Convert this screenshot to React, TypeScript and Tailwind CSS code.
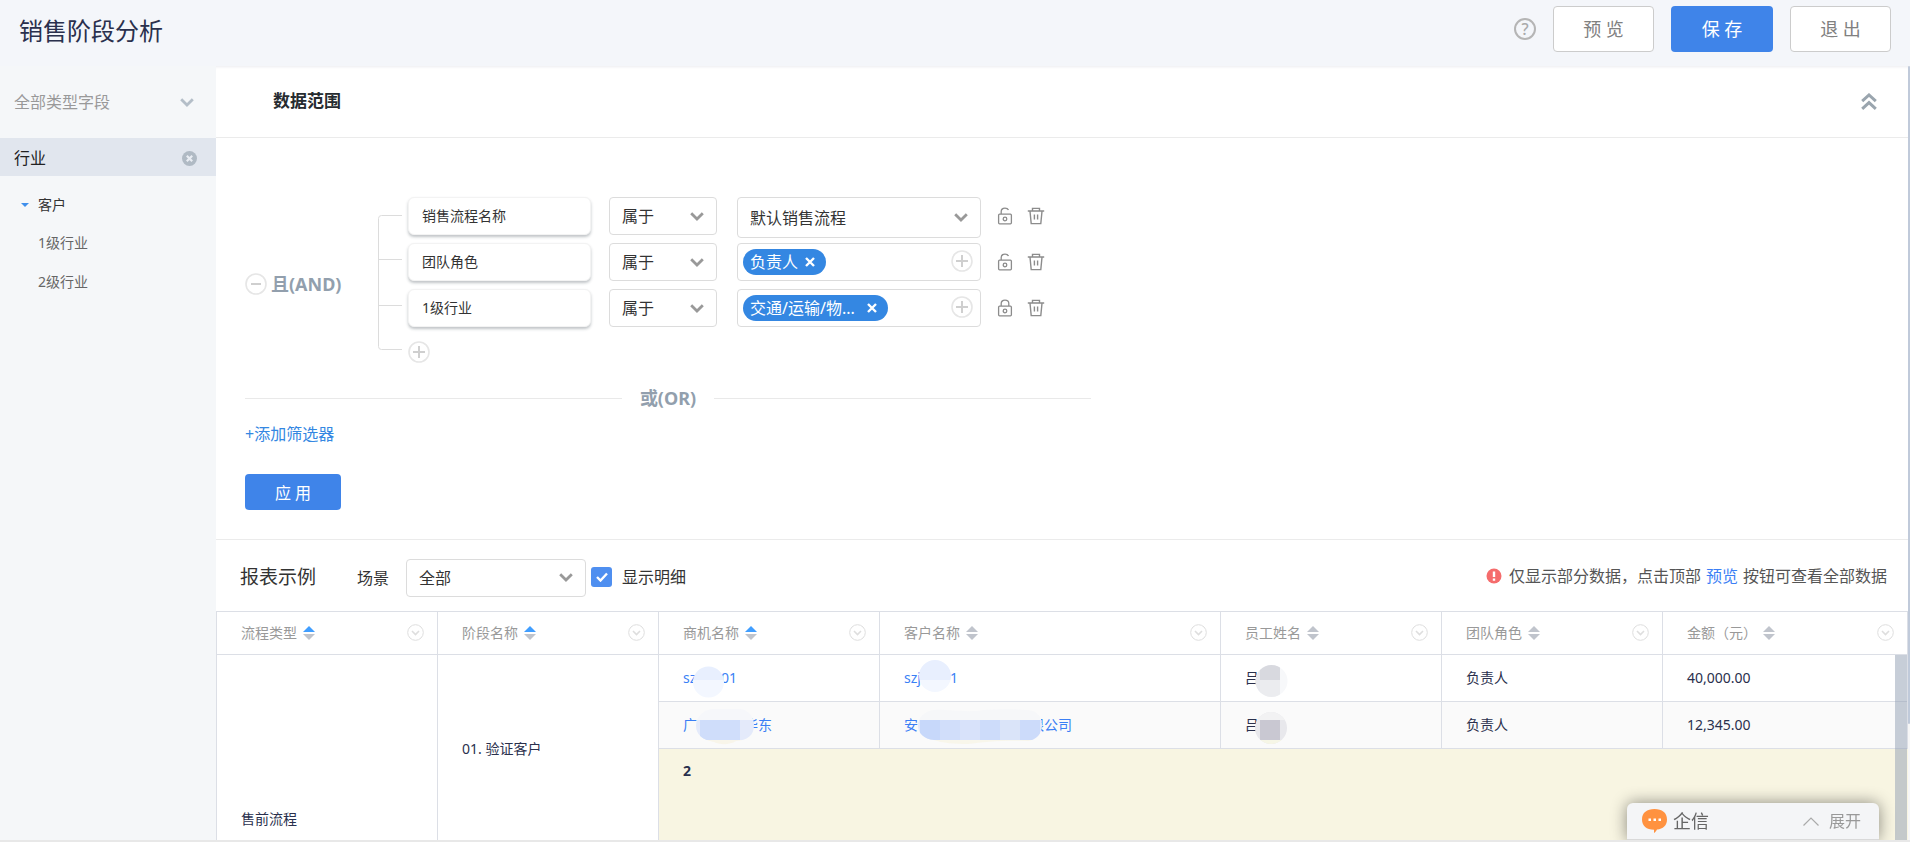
import { clsx } from 'clsx';
import type { ReactNode } from 'react';

type SelectProps = { name: string; label: string; className: string; chevronClass?: string };

const COLUMNS = [
  { title: '流程类型', width: 'w-[221px]', sorted: true },
  { title: '阶段名称', width: 'w-[221px]', sorted: true },
  { title: '商机名称', width: 'w-[221px]', sorted: true },
  { title: '客户名称', width: 'w-[341px]', sorted: false },
  { title: '员工姓名', width: 'w-[221px]', sorted: false },
  { title: '团队角色', width: 'w-[221px]', sorted: false },
  { title: '金额（元）', width: '', sorted: false },
];

const FILTERS = [
  { field: '销售流程名称', select: '默认销售流程', locked: false },
  { field: '团队角色', tag: '负责人', tagWidth: 'w-12', locked: false },
  { field: '1级行业', tag: '交通/运输/物...', tagWidth: 'w-[110px]', locked: true },
];

function Chevron({ className }: { className?: string }) {
  return (
    <svg viewBox="0 0 14 9" className={clsx('h-[9px] w-3.5 fill-none', className)} aria-hidden="true">
      <path d="M1.2 1.200 7 7l5.800-5.800" stroke="currentColor" strokeWidth="2.800" />
    </svg>
  );
}

function Select({ label, name, className, chevronClass = 'text-[#999]' }: SelectProps) {
  return (
    <div className={clsx('relative flex items-center', className)}>
      <select aria-label={name} className="h-full w-full appearance-none bg-transparent pr-8 pl-3 text-base outline-none">
        <option>{label}</option>
      </select>
      <Chevron className={clsx('pointer-events-none absolute right-3', chevronClass)} />
    </div>
  );
}

function CircleIcon({ plus = false }: { plus?: boolean }) {
  return (
    <svg viewBox="0 0 22 22" className="size-[22px] fill-none" aria-hidden="true">
      <circle cx="11" cy="11" r="10" stroke="#e6e6e6" strokeWidth="1.600" />
      <path d={plus ? 'M5 11h12M11 5v12' : 'M6 11h10'} stroke="#cfcfcf" strokeWidth="2" />
    </svg>
  );
}

function LockIcon({ locked }: { locked: boolean }) {
  return (
    <svg viewBox="0 0 16 18" className="h-[18px] w-4 fill-none" stroke="#8c8c8c" strokeWidth="1.3" aria-hidden="true">
      <rect x="1.6" y="7.2" width="12.8" height="9.6" rx="1" />
      <path d={locked ? 'M4.2 7V4.6C4.2 2.6 5.6 1.2 8 1.2s3.8 1.4 3.8 3.4V7' : 'M4.2 7V4.6C4.2 2.6 5.6 1.2 8 1.2c1.8 0 3 .8 3.5 1.9'} />
      <circle cx="8" cy="12" r="1.8" />
    </svg>
  );
}

function TrashIcon() {
  return (
    <svg viewBox="0 0 18 18" className="size-[18px] fill-none" stroke="#8c8c8c" strokeWidth="1.4" aria-hidden="true">
      <path d="M.8 4h16.4M5.500 3.800V1.400h7v2.400M3 4.200l1.200 12.400h9.600L15 4.200M7.400 7.400v5M10.600 7.400v5" />
    </svg>
  );
}

function SortIcon({ active }: { active: boolean }) {
  return (
    <svg viewBox="0 0 12 14" className="h-3.5 w-3" aria-hidden="true">
      <path d="M6 0l6 6H0z" fill={active ? '#409eff' : '#c0c4cc'} />
      <path d="M0 8h12l-6 6z" fill="#c0c4cc" />
    </svg>
  );
}

function Blob({ id, className, width, height, shape, children }: { id: string; className: string; width: number; height: number; shape: ReactNode; children: ReactNode }) {
  return (
    <svg viewBox={`0 0 ${width} ${height}`} width={width} height={height} className={clsx('absolute', className)} aria-hidden="true">
      <clipPath id={id}>{shape}</clipPath>
      <g clipPath={`url(#${id})`}>{children}</g>
    </svg>
  );
}

function Header() {
  return (
    <header className="flex h-[66px] shrink-0 items-center justify-between bg-[#f4f6fa] pr-[19px] pb-2 pl-[19px]">
      <h1 className="pt-1 text-2xl text-[#2a304d]">销售阶段分析</h1>
      <div className="flex items-center gap-[17px] text-lg text-[#808080]">
        <button aria-label="帮助" className="flex size-[22px] items-center justify-center rounded-full border-2 border-[#b5b5b5] text-base leading-none font-medium text-[#aaa]">
          ?
        </button>
        <button className="h-[46px] w-[101px] rounded border border-[#ccc] bg-white">预 览</button>
        <button className="h-[46px] w-[102px] rounded bg-[#3f84e9] text-white">保 存</button>
        <button className="h-[46px] w-[101px] rounded border border-[#ccc] bg-white">退 出</button>
      </div>
    </header>
  );
}

function Sidebar() {
  return (
    <aside className="w-[216px] shrink-0 bg-[#f5f7f9]">
      <Select name="字段类型" label="全部类型字段" className="h-[72px] pr-2 pl-0.5 text-[#999]" chevronClass="right-[22px] text-[#b4bec8]" />
      <div className="flex h-[38px] items-center justify-between bg-[#e1e6ee] pt-0.5 pr-[19px] pl-3.5 text-base text-[#222]">
        行业
        <button aria-label="清除">
          <svg viewBox="0 0 15 15" className="size-[15px]" aria-hidden="true">
            <circle cx="7.5" cy="7.5" r="7.5" fill="#b0bac4" />
            <path d="M4.8 4.8l5.4 5.4M10.2 4.8l-5.4 5.4" stroke="#e9edf3" strokeWidth="2.2" />
          </svg>
        </button>
      </div>
      <ul className="pt-2.5 pl-[38px] text-sm text-[#666]">
        <li className="relative flex h-[38px] items-center text-[#333]">
          <span className="absolute -left-[17px] border-x-4 border-t-4 border-x-transparent border-t-[#3f8fec]" />
          客户
        </li>
        <li className="flex h-[38px] items-center">1级行业</li>
        <li className="flex h-10 items-center">2级行业</li>
      </ul>
    </aside>
  );
}

function FilterRow({ filter }: { filter: (typeof FILTERS)[number] }) {
  return (
    <li className="flex h-[38px] items-start">
      <div className="mr-[18px] flex h-[38px] w-[183px] items-center rounded-md border border-[#f3f3f3] bg-white pl-[13px] text-sm shadow-[0_2px_3px_rgba(60,70,80,0.32)]">
        {filter.field}
      </div>
      <Select name={`${filter.field}条件`} label="属于" className="mr-5 h-[38px] w-[108px] rounded border border-[#dcdcdc]" />
      {filter.select ? (
        <Select name={filter.field} label={filter.select} className="h-[41px] w-[244px] rounded border border-[#dcdcdc]" />
      ) : (
        <div className="flex h-[38px] w-[244px] items-center justify-between rounded border border-[#dcdcdc] pr-[7px] pl-[5px]">
          <span className="flex h-[26px] items-center gap-[7px] rounded-full bg-[#3487e2] pr-[11px] pl-[7px] text-base text-white">
            <span className={filter.tagWidth}>{filter.tag}</span>
            <button aria-label="移除">
              <svg viewBox="0 0 10 10" className="size-2.5" aria-hidden="true">
                <path d="M1 1l8 8M9 1L1 9" stroke="#fff" strokeWidth="2.4" />
              </svg>
            </button>
          </span>
          <button aria-label="添加" className="pb-0.5">
            <CircleIcon plus />
          </button>
        </div>
      )}
      <div className="ml-4 flex h-[38px] items-center gap-3.5">
        <button aria-label="锁定">
          <LockIcon locked={filter.locked} />
        </button>
        <button aria-label="删除">
          <TrashIcon />
        </button>
      </div>
    </li>
  );
}

function DataRange() {
  return (
    <section className="shrink-0 border-b border-[#ebebeb]">
      <div className="flex h-[72px] items-center justify-between border-b border-[#ebebeb] pr-[31px] pl-[57px]">
        <h2 className="pb-0.5 text-[17px] font-bold text-[#262b30]">数据范围</h2>
        <button aria-label="收起">
          <svg viewBox="0 0 16 17" className="h-[17px] w-4 fill-none" stroke="#9aa5ae" strokeWidth="3" aria-hidden="true">
            <path d="M1.2 8.200 8 2l6.800 6.200M1.200 15.800 8 9.600l6.800 6.200" />
          </svg>
        </button>
      </div>

      <div className="px-[29px] pt-[59px] pb-[29px] text-[#333]">
        <div className="flex">
          <div className="flex w-[133px] items-center gap-1 pt-2 text-lg font-bold text-[#929fad]">
            <button aria-label="移除条件组">
              <CircleIcon />
            </button>
            且(AND)
          </div>
          <svg viewBox="0 0 30 166" className="h-[166px] w-[30px] fill-none" stroke="#dcdcdc" aria-hidden="true">
            <path d="M24 18.500H3.500q-3 0-3 3V149.500q0 3 3 3H24M.5 62.500H24M.5 108.500H24" />
          </svg>
          <div>
            <ul className="flex flex-col gap-2">
              {FILTERS.map((filter) => (
                <FilterRow key={filter.field} filter={filter} />
              ))}
            </ul>
            <button aria-label="添加条件" className="mt-3.5 block">
              <CircleIcon plus />
            </button>
          </div>
        </div>

        <div className="mt-[23px] flex max-w-[846px] items-center gap-[18px] text-lg leading-6 font-bold text-[#929fad]">
          <span className="h-px flex-1 bg-[#e9e9e9]" />
          或(OR)
          <span className="h-px flex-1 bg-[#e9e9e9]" />
        </div>
        <a href="#add" className="mt-3 block text-base text-[#3487e2]">
          +添加筛选器
        </a>
        <button className="mt-7 h-9 w-24 rounded bg-[#3f84e9] pt-0.5 text-base text-white">应 用</button>
      </div>
    </section>
  );
}

function Toolbar() {
  return (
    <div className="flex h-[71px] shrink-0 items-center justify-between pt-1 pr-[21px] pl-6 text-base text-[#333]">
      <div className="flex items-center">
        <h2 className="mr-[41px] text-[19px]">报表示例</h2>
        <span className="mr-[17px]">场景</span>
        <Select name="场景" label="全部" className="mr-[5px] h-[38px] w-[180px] rounded border border-[#dcdcdc]" />
        <label className="flex items-center gap-2.5 pb-0.5">
          <span className="relative flex">
            <input type="checkbox" defaultChecked className="h-5 w-[21px] appearance-none rounded-[3px] bg-[#4f8ff0]" />
            <svg viewBox="0 0 12 10" className="pointer-events-none absolute top-[5px] left-[5px] h-2.5 w-3 fill-none" aria-hidden="true">
              <path d="M1 5l3.500 3.500L11 1.500" stroke="#fff" strokeWidth="2.400" />
            </svg>
          </span>
          显示明细
        </label>
      </div>
      <p className="flex items-center gap-[5px] pb-1 text-[#555]">
        <svg viewBox="0 0 16 16" className="mr-0.5 size-4" aria-hidden="true">
          <circle cx="8" cy="8" r="7.500" fill="#f56c6c" />
          <path d="M8 3.500v5.500M8 10.500v2.200" stroke="#fff" strokeWidth="2.400" />
        </svg>
        仅显示部分数据，点击顶部
        <a href="#preview" className="text-[#3b7ff5]">
          预览
        </a>
        按钮可查看全部数据
      </p>
    </div>
  );
}

function ReportTable() {
  const cell = 'border-r border-b border-[#dcdfe6] px-6 text-left font-normal';

  return (
    <div className="relative min-h-0 flex-1 overflow-hidden border-t border-l border-[#dcdfe6]">
      <table className="w-full table-fixed border-separate border-spacing-0 text-sm text-[#2a304d]">
        <thead>
          <tr className="h-[43px] text-[#999]">
            {COLUMNS.map((col) => (
              <th key={col.title} className={clsx('border-r border-b border-[#dcdfe6] pr-[13px] pl-6 font-normal', col.width)}>
                <div className="flex items-center gap-1.5">
                  {col.title}
                  <button aria-label="排序">
                    <SortIcon active={col.sorted} />
                  </button>
                  <button aria-label="列菜单" className="ml-auto pb-0.5">
                    <svg viewBox="0 0 17 17" className="size-[17px] fill-none" stroke="#dedede" aria-hidden="true">
                      <circle cx="8.500" cy="8.500" r="7.800" />
                      <path d="M5 7l3.500 3.500L12 7" strokeWidth="1.600" />
                    </svg>
                  </button>
                </div>
              </th>
            ))}
          </tr>
        </thead>
        <tbody>
          <tr className="h-[47px]">
            <td rowSpan={4} className={cell}>
              售前流程
            </td>
            <td rowSpan={3} className={cell}>
              01. 验证客户
            </td>
            <td className={clsx(cell, 'text-[#3b7ff5]')}>
              <a href="#sz" className="relative flex w-[54px] justify-between">
                <span>sz</span>
                <span>01</span>
                <Blob id="blob-deal-1" className="-top-0.5 left-2.5" width={31} height={32} shape={<circle cx="15.500" cy="16" r="15.500" />}>
                  <rect width="32" height="14" fill="#e8effe" />
                  <rect y="14" width="32" height="18" fill="#f3f7ff" />
                </Blob>
              </a>
            </td>
            <td className={clsx(cell, 'text-[#3b7ff5]')}>
              <a href="#szj" className="relative flex w-[54px] justify-between">
                <span>szj</span>
                <span>01</span>
                <Blob id="blob-client-1" className="-top-2 left-[15px]" width={32} height={32} shape={<circle cx="16" cy="16" r="16" />}>
                  <rect width="32" height="20" fill="#e8effe" />
                  <rect y="20" width="32" height="12" fill="#f3f7ff" />
                </Blob>
              </a>
            </td>
            <td className={cell}>
              <div className="relative">
                吕
                <Blob id="blob-staff-1" className="-top-[3px] left-2.5" width={33} height={32} shape={<circle cx="16.500" cy="16" r="16" />}>
                  <rect width="33" height="32" fill="#f7f8fa" />
                  <rect width="5" height="32" fill="#e8e9ee" />
                  <rect x="5" width="20" height="15" fill="#d8d9df" />
                  <rect x="5" y="15" width="20" height="17" fill="#ebecef" />
                </Blob>
              </div>
            </td>
            <td className={cell}>负责人</td>
            <td className={cell}>40,000.00</td>
          </tr>
          <tr className="h-[47px] bg-[#fafafa]">
            <td className={clsx(cell, 'text-[#3b7ff5]')}>
              <a href="#gd" className="relative flex w-[89px] justify-between">
                <span>广</span>
                <span>华东</span>
                <Blob id="blob-deal-2" className="-top-1.5 left-3" width={59} height={36} shape={<path d="M17 0h26c10 0 16 7 16 16 0 11-7 15-18 16-6 4-16 4-22 1C7 31 1 25 1 17 1 8 8 1 17 0z" />}>
                  <rect width="59" height="11" fill="#f6f7fa" />
                  <rect y="11" width="59" height="20" fill="#e4eafa" />
                  <rect x="5" y="11" width="20" height="20" fill="#cfddfa" />
                  <rect x="25" y="11" width="20" height="20" fill="#d0defb" />
                  <rect y="31" width="59" height="5" fill="#f8f5ea" />
                </Blob>
              </a>
            </td>
            <td className={clsx(cell, 'text-[#3b7ff5]')}>
              <a href="#ah" className="relative flex w-[168px] justify-between">
                <span>安</span>
                <span>限公司</span>
                <Blob id="blob-client-2" className="-top-1.5 left-[13px]" width={126} height={36} shape={<path d="M17 1c12-1 34 3 50 0 14-1 30-1 42 0 10 0 16 6 16 15s-6 15-14 16c-24-1-44 1-60 3-14 0-26-1-34-4C7 30 1 24 1 17 1 8 8 2 17 1z" />}>
                  <rect width="126" height="11" fill="#f6f7f9" />
                  <rect y="11" width="126" height="20" fill="#e4eafa" />
                  <rect x="3" y="11" width="20" height="20" fill="#c7d8fa" />
                  <rect x="23" y="11" width="20" height="20" fill="#d1defa" />
                  <rect x="43" y="11" width="20" height="20" fill="#d8e2fa" />
                  <rect x="63" y="11" width="20" height="20" fill="#cddcfa" />
                  <rect x="83" y="11" width="20" height="20" fill="#dae4f9" />
                  <rect x="103" y="11" width="20" height="20" fill="#ccdbfa" />
                  <rect y="31" width="126" height="5" fill="#f8f6eb" />
                </Blob>
              </a>
            </td>
            <td className={cell}>
              <div className="relative">
                吕
                <Blob id="blob-staff-2" className="-top-[3px] left-2.5" width={32} height={32} shape={<circle cx="16" cy="16" r="16" />}>
                  <rect width="32" height="32" fill="#e8e8ec" />
                  <rect width="32" height="8" fill="#f2f2f3" />
                  <rect x="5" y="8" width="20" height="20" fill="#c9c8d2" />
                  <rect y="28" width="32" height="4" fill="#f6f6e6" />
                </Blob>
              </div>
            </td>
            <td className={cell}>负责人</td>
            <td className={cell}>12,345.00</td>
          </tr>
          <tr className="h-[94px] bg-[#f8f5e2]">
            <td colSpan={5} className="px-6 pt-3 align-top font-bold">
              2
            </td>
          </tr>
          <tr className="h-[141px] bg-[#f8f5e2]">
            <td colSpan={6} />
          </tr>
        </tbody>
      </table>
      <div className="absolute top-[43px] right-px bottom-0 w-3 bg-[#8f9eb1]/50" />
    </div>
  );
}

function ChatDock() {
  return (
    <button className="fixed right-[31px] bottom-[3px] flex h-[37px] w-[252px] items-center rounded-t-md border-b border-[#d9d9d9] bg-[#f4f5f7] px-[15px] text-base text-[#999] shadow-[0_0_16px_rgba(0,0,0,0.45)] [clip-path:inset(-24px_-24px_0_-24px)]">
      <svg viewBox="0 0 25 24" className="h-6 w-[25px]" aria-hidden="true">
        <path d="M12.500 0C20 0 25 3.500 25 10.500c0 6-4 9.500-10 10-1 2-2 3-3 3.500v-3.300C4.500 20.700 0 17 0 10.500 0 3.500 5 0 12.500 0z" fill="#ff9240" />
        <path d="M6.500 9.500h2.500v2.500H6.500zM11.500 9.500H14v2.500h-2.500zM16.500 9.500H19v2.500h-2.500z" fill="#fff" />
      </svg>
      <span className="ml-1.5 text-lg text-[#666]">企信</span>
      <svg viewBox="0 0 16 9" className="mr-2.5 ml-auto h-[9px] w-4 fill-none" stroke="#aaa" strokeWidth="1.200" aria-hidden="true">
        <path d="M.5 8.500 8 1l7.500 7.500" />
      </svg>
      <span className="pr-[3px]">展开</span>
    </button>
  );
}

export default function App() {
  return (
    <div className="flex h-screen flex-col bg-white pb-px font-['Noto_Sans','Noto_Sans_CJK_SC',sans-serif]">
      <Header />
      <div className="flex min-h-0 flex-1 border-b-2 border-[#e8e8e8]">
        <Sidebar />
        <main className="flex min-w-0 flex-1 flex-col shadow-[inset_0_3px_3px_-2px_#ececf0]">
          <DataRange />
          <Toolbar />
          <ReportTable />
        </main>
        <div className="w-0.5 bg-[#f7f7f7]">
          <div className="h-[85%] rounded-sm bg-[#c0cada]" />
        </div>
      </div>
      <ChatDock />
    </div>
  );
}
